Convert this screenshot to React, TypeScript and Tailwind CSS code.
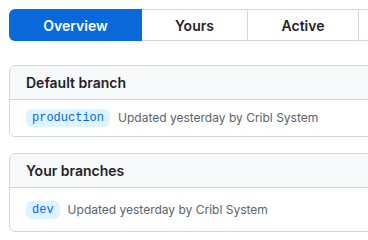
const tabs = [
  { label: "Overview", w: "w-[133px]" },
  { label: "Yours", w: "w-[106px]" },
  { label: "Active", w: "w-[111px]" },
  { label: "", w: "w-[130px]" },
];

const BranchCard = ({
  title,
  branch,
  bodyH,
}: {
  title: string;
  branch: string;
  bodyH: string;
}) => {
  return (
    <div className="border border-[#d0d7de] rounded-md w-[520px] overflow-hidden">
      <div className="h-[34px] bg-[#f6f8fa] border-b border-[#d0d7de] flex items-center px-4">
        <h3 className="text-[14px] font-semibold text-[#1f2328]">{title}</h3>
      </div>
      <div className={`${bodyH} flex items-center px-4 gap-2`}>
        <span className="bg-[#ddf4ff] text-[#0969da] rounded-md px-[6px] h-[18px] flex items-center text-[12px] font-['Liberation_Mono',monospace]">
          {branch}
        </span>
        <span className="text-[12px] text-[#59636e]">
          Updated yesterday by Cribl System
        </span>
      </div>
    </div>
  );
};

const App = () => {
  return (
    <div className="w-[368px] h-[240px] overflow-hidden bg-white font-['Inter',sans-serif]">
      <div className="pl-[9px] pt-[9px] w-[600px]">
        {/* tabs */}
        <div className="flex h-[32px]">
          {tabs.map((t, i) => (
            <div
              key={i}
              className={
                i === 0
                  ? `${t.w} bg-[#0969da] text-white rounded-l-md flex items-center justify-center text-[14px] font-semibold`
                  : `${t.w} border-y border-r border-[#d0d7de] text-[#1f2328] flex items-center justify-center text-[14px] font-semibold`
              }
            >
              {t.label}
            </div>
          ))}
        </div>

        {/* cards */}
        <div className="mt-[24px] flex flex-col gap-[16px]">
          <BranchCard title="Default branch" branch="production" bodyH="h-[36px]" />
          <BranchCard title="Your branches" branch="dev" bodyH="h-[43px]" />
        </div>
      </div>
    </div>
  );
};

export default App;
